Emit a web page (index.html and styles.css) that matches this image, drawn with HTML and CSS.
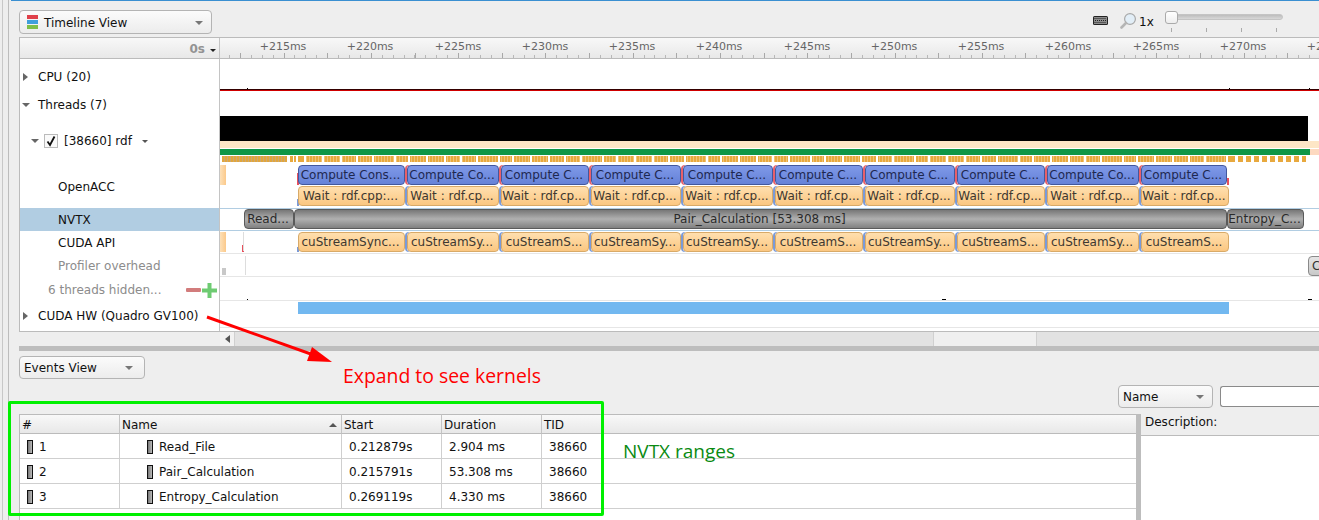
FILE: index.html
```html
<!DOCTYPE html>
<html lang="en">
<head>
    <meta charset="UTF-8">
    <meta name="viewport" content="width=device-width, initial-scale=1.0">
    <title>Timeline View</title>
    <link rel="stylesheet" href="styles.css">
</head>
<body>

<div class="page">
<div class="inner">
    <div class="topline"></div>

    <!-- Toolbar -->
    <div class="toolbar">
        <div class="select select-view">
            <svg class="view-icon" width="11" height="14" viewBox="0 0 11 14">
                <rect x="0" y="0" width="11" height="4" fill="#e0404a"/>
                <rect x="0" y="5" width="11" height="4" fill="#3f9fdc"/>
                <rect x="0" y="10" width="11" height="4" fill="#7fbf4a"/>
            </svg>
            <span>Timeline View</span>
            <i class="caret"></i>
        </div>
        <div class="tools">
            <svg class="kbd-icon" width="15" height="9" viewBox="0 0 15 9">
                <rect width="15" height="9" rx="1.5" fill="#222"/>
                <rect x="1" y="1" width="13" height="7" fill="#8c8c8c"/>
                <path d="M1.5 2.5h12M2 4.5h11M1.5 6.5h12" stroke="#222" stroke-width="1" stroke-dasharray="1 1"/>
            </svg>
            <svg class="zoom-icon" width="16" height="16" viewBox="0 0 16 16">
                <circle cx="10" cy="6" r="5.4" fill="#e2eef7" stroke="#a8a8a8" stroke-width="1.2"/>
                <path d="M6 10L1.5 14.5" stroke="#b5b5b5" stroke-width="2.6" stroke-linecap="round"/>
            </svg>
            <span class="zoom-value">1x</span>
            <div class="slider">
                <div class="slider-groove"></div>
                <div class="slider-handle"></div>
                <div class="slider-ticks"><i></i><i></i><i></i><i></i></div>
            </div>
        </div>
    </div>

    <!-- Timeline -->
    <div class="timeline">
        <div class="row row-ruler">
            <div class="label label-ruler"><b>0s</b><i class="sort-mark"></i></div>
            <div class="track ruler">
                <span class="ruler-text" style="left:63px">+215ms</span>
                <span class="ruler-text" style="left:150px">+220ms</span>
                <span class="ruler-text" style="left:238px">+225ms</span>
                <span class="ruler-text" style="left:325px">+230ms</span>
                <span class="ruler-text" style="left:412px">+235ms</span>
                <span class="ruler-text" style="left:499px">+240ms</span>
                <span class="ruler-text" style="left:587px">+245ms</span>
                <span class="ruler-text" style="left:674px">+250ms</span>
                <span class="ruler-text" style="left:761px">+255ms</span>
                <span class="ruler-text" style="left:848px">+260ms</span>
                <span class="ruler-text" style="left:936px">+265ms</span>
                <span class="ruler-text" style="left:1023px">+270ms</span>
                <span class="ruler-text" style="left:1110px">+275ms</span>
            </div>
        </div>

        <div class="row row-cpu">
            <div class="label lvl-0"><span class="arrow"><i class="tri-right"></i></span>CPU (20)</div>
            <div class="track">
                <div class="cpu-line"></div>
                <i class="dot" style="left:27px;top:29px"></i>
                <i class="dot" style="left:1009px;top:29px"></i>
                <i class="dot" style="left:1089px;top:29px"></i>
            </div>
        </div>

        <div class="row row-threads">
            <div class="label lvl-0"><span class="arrow"><i class="tri-down"></i></span>Threads (7)</div>
            <div class="track"></div>
        </div>

        <div class="row row-rdf">
            <div class="label lvl-1">
                <span class="arrow-small"><i class="tri-down"></i></span>
                <span class="check">
                    <svg width="12" height="12" viewBox="0 0 12 12"><path d="M2.5 6.5L5 10L9.5 1.5" fill="none" stroke="#111" stroke-width="1.8"/></svg>
                </span>
                <span class="thread-name">[38660] rdf</span>
                <i class="tri-mini"></i>
            </div>
            <div class="track">
                <div class="bar-black"></div>
                <div class="bar-beige"></div>
                <div class="bar-peach"></div>
                <div class="bar-green"></div>
                <div class="strip strip-a"></div>
                <div class="strip strip-b"></div>
                <div class="strip strip-c"></div>
                <div class="strip strip-d"></div>
            </div>
        </div>

        <div class="row row-acc">
            <div class="label lvl-2">OpenACC</div>
            <div class="track">
                <div class="stub" style="left:0;top:0;height:20px"></div>
                <i class="mark mark-red" style="left:77px;top:8px;height:12px"></i>
                <i class="mark mark-blue" style="left:77px;top:34px;height:7px"></i>
                <i class="mark mark-red" style="left:1007px;top:13px;height:7px"></i>
                <div class="block compute" style="left:78px;width:107px;top:0">Compute Cons...</div>
                <div class="block compute gap" style="left:187px;width:92px;top:0">Compute Co...</div>
                <div class="block compute gap" style="left:281px;width:88px;top:0">Compute C...</div>
                <div class="block compute gap" style="left:371px;width:90px;top:0">Compute C...</div>
                <div class="block compute gap" style="left:463px;width:90px;top:0">Compute C...</div>
                <div class="block compute gap" style="left:555px;width:88px;top:0">Compute C...</div>
                <div class="block compute gap" style="left:645px;width:90px;top:0">Compute C...</div>
                <div class="block compute gap" style="left:737px;width:88px;top:0">Compute C...</div>
                <div class="block compute gap" style="left:827px;width:92px;top:0">Compute Co...</div>
                <div class="block compute gap" style="left:921px;width:86px;top:0">Compute C...</div>
                <div class="block wait" style="left:78px;width:107px;top:21px">Wait : rdf.cpp:...</div>
                <div class="block wait gap" style="left:187px;width:92px;top:21px">Wait : rdf.cp...</div>
                <div class="block wait gap" style="left:281px;width:88px;top:21px">Wait : rdf.cp...</div>
                <div class="block wait gap" style="left:371px;width:90px;top:21px">Wait : rdf.cp...</div>
                <div class="block wait gap" style="left:463px;width:90px;top:21px">Wait : rdf.cp...</div>
                <div class="block wait gap" style="left:555px;width:88px;top:21px">Wait : rdf.cp...</div>
                <div class="block wait gap" style="left:645px;width:90px;top:21px">Wait : rdf.cp...</div>
                <div class="block wait gap" style="left:737px;width:88px;top:21px">Wait : rdf.cp...</div>
                <div class="block wait gap" style="left:827px;width:92px;top:21px">Wait : rdf.cp...</div>
                <div class="block wait gap" style="left:921px;width:88px;top:21px">Wait : rdf.cp...</div>
            </div>
        </div>

        <div class="row row-nvtx selected">
            <div class="label lvl-2">NVTX</div>
            <div class="track">
                <div class="block range" style="left:24px;width:50px;top:0">Read...</div>
                <div class="block range" style="left:74px;width:933px;top:0">Pair_Calculation [53.308 ms]</div>
                <div class="block range" style="left:1007px;width:77px;top:0">Entropy_C...</div>
            </div>
        </div>

        <div class="row row-api">
            <div class="label lvl-2">CUDA API</div>
            <div class="track">
                <div class="stub" style="left:0;top:1px;height:20px"></div>
                <i class="mark mark-red" style="left:22px;top:14px;height:7px"></i>
                <i class="overhead-b" style="left:23px;top:1px"></i>
                <i class="mark mark-blue" style="left:77px;top:16px;height:5px"></i>
                <div class="block wait" style="left:78px;width:107px;top:1px">cuStreamSync...</div>
                <div class="block wait gap" style="left:187px;width:92px;top:1px">cuStreamSy...</div>
                <div class="block wait gap" style="left:281px;width:88px;top:1px">cuStreamS...</div>
                <div class="block wait gap" style="left:371px;width:90px;top:1px">cuStreamSy...</div>
                <div class="block wait gap" style="left:463px;width:90px;top:1px">cuStreamSy...</div>
                <div class="block wait gap" style="left:555px;width:88px;top:1px">cuStreamS...</div>
                <div class="block wait gap" style="left:645px;width:90px;top:1px">cuStreamSy...</div>
                <div class="block wait gap" style="left:737px;width:88px;top:1px">cuStreamS...</div>
                <div class="block wait gap" style="left:827px;width:92px;top:1px">cuStreamSy...</div>
                <div class="block wait gap" style="left:921px;width:88px;top:1px">cuStreamS...</div>
            </div>
        </div>

        <div class="row row-overhead">
            <div class="label lvl-2 muted">Profiler overhead</div>
            <div class="track">
                <i class="overhead-a"></i>
                <i class="overhead-b" style="left:25px;top:2px"></i>
                <div class="block overhead" style="left:1088px;width:24px;top:2px">C</div>
            </div>
        </div>

        <div class="row row-hidden">
            <div class="label lvl-3 muted">
                <span>6 threads hidden...</span>
                <span class="hidden-btns">
                    <svg width="15" height="4" viewBox="0 0 15 4"><rect width="15" height="4" rx="1" fill="#d27c7c"/></svg>
                    <svg width="15" height="15" viewBox="0 0 15 15"><path d="M5.5 0h4v5.5H15v4H9.5V15h-4V9.5H0v-4h5.5z" fill="#6ecb72"/></svg>
                </span>
            </div>
            <div class="track">
                <i class="dot" style="left:27px;top:22px"></i>
                <i class="dot dot-wide" style="left:722px;top:22px"></i>
                <i class="dot dot-wide" style="left:1088px;top:22px"></i>
            </div>
        </div>

        <div class="row row-hw">
            <div class="label lvl-0"><span class="arrow"><i class="tri-right"></i></span>CUDA HW (Quadro GV100)</div>
            <div class="track">
                <div class="hw-bar"></div>
            </div>
        </div>
    </div>

    <!-- Horizontal scrollbar -->
    <div class="scrollbar">
        <div class="scroll-btn"><i class="tri-left"></i></div>
        <div class="scroll-track"><div class="scroll-thumb"></div></div>
    </div>

    <div class="splitter"></div>

    <!-- Events -->
    <div class="events-head">
        <div class="select select-events"><span>Events View</span><i class="caret"></i></div>
        <div class="filter">
            <div class="select select-name"><span>Name</span><i class="caret"></i></div>
            <div class="filter-input"></div>
        </div>
    </div>

    <div class="events-body">
        <table class="events">
            <thead>
                <tr>
                    <th class="col-num">#</th>
                    <th class="col-name">Name<i class="sort-up"></i></th>
                    <th class="col-num">Start</th>
                    <th class="col-num">Duration</th>
                    <th>TID</th>
                </tr>
            </thead>
            <tbody>
                <tr>
                    <td class="cell-id"><i class="swatch"></i>1</td>
                    <td class="cell-name"><i class="swatch"></i>Read_File</td>
                    <td>0.212879s</td>
                    <td>2.904 ms</td>
                    <td>38660</td>
                </tr>
                <tr>
                    <td class="cell-id"><i class="swatch"></i>2</td>
                    <td class="cell-name"><i class="swatch"></i>Pair_Calculation</td>
                    <td>0.215791s</td>
                    <td>53.308 ms</td>
                    <td>38660</td>
                </tr>
                <tr>
                    <td class="cell-id"><i class="swatch"></i>3</td>
                    <td class="cell-name"><i class="swatch"></i>Entropy_Calculation</td>
                    <td>0.269119s</td>
                    <td>4.330 ms</td>
                    <td>38660</td>
                </tr>
            </tbody>
        </table>
        <div class="v-split"></div>
        <div class="description">
            <div class="description-head">Description:</div>
            <div class="description-text"></div>
        </div>
    </div>
</div>
</div>

<!-- Annotations drawn on top of the screenshot -->
<svg class="note-arrow" width="1319" height="520" viewBox="0 0 1319 520">
    <path d="M207 317L322 358" stroke="#f00" stroke-width="3"/>
    <path d="M312 347L332 362L307 361z" fill="#f00"/>
</svg>
<div class="note note-expand">Expand to see kernels</div>
<div class="note note-ranges">NVTX ranges</div>
<div class="note-box"></div>

</body>
</html>
```

FILE: styles.css
```css
* {
    box-sizing: border-box;
}
body {
    margin: 0;
    width: 1319px;
    height: 520px;
    overflow: hidden;
    position: relative;
    background-color: #eeeeee;
    color: #111;
    font-family: "DejaVu Sans", sans-serif;
    font-size: 12px;
}
i {
    display: block;
    font-style: normal;
}

/* Frame lines left of the window */
.page {
    margin-left: 2px;
    height: 520px;
    border-left: 1px solid #c8c8c8;
}
.inner {
    margin-left: 5px;
    height: 520px;
    padding-left: 10px;
    border-left: 1px solid #bdbdbd;
}
.topline {
    height: 1px;
    margin-left: -8px;
    background-color: #3a8fd1;
}

/* Toolbar */
.toolbar {
    display: flex;
    height: 36px;
    padding-top: 9px;
}
.select {
    display: flex;
    align-items: center;
    height: 24px;
    border: 1px solid #b4b4b4;
    border-radius: 4px;
    background: linear-gradient(#fbfbfb, #ececec);
    white-space: nowrap;
}
.caret {
    margin-left: auto;
    width: 0;
    height: 0;
    border-left: 4px solid transparent;
    border-right: 4px solid transparent;
    border-top: 4px solid #777;
}
.select-view {
    width: 193px;
    padding: 2px 8px 0 7px;
}
.view-icon {
    margin-right: 6px;
    margin-top: -2px;
}
.tools {
    display: flex;
    align-items: flex-start;
    margin-left: auto;
    padding-right: 36px;
}
.kbd-icon {
    margin-top: 6px;
    margin-right: 12px;
}
.zoom-icon {
    margin-top: 3px;
    margin-right: 3px;
}
.zoom-value {
    margin-top: 5px;
    width: 26px;
}
.slider {
    position: relative;
    width: 118px;
    height: 24px;
}
.slider-groove {
    position: absolute;
    left: 0;
    right: 0;
    top: 4px;
    height: 6px;
    border-radius: 3px;
    background: linear-gradient(#bdbdbd, #d8d8d8);
    border: 1px solid #c4c4c4;
}
.slider-handle {
    position: absolute;
    left: 0;
    top: 1px;
    width: 13px;
    height: 13px;
    border-radius: 3px;
    border: 1px solid #aaa;
    background: linear-gradient(#ffffff, #eeeeee);
}
.slider-ticks {
    position: absolute;
    left: 6px;
    top: 18px;
    width: 106px;
    display: flex;
    justify-content: space-between;
}
.slider-ticks i {
    width: 1px;
    height: 4px;
    background-color: #aaa;
}

/* Timeline */
.timeline {
    height: 295px;
    border-left: 1px solid #bbb;
    border-top: 1px solid #bbb;
    border-bottom: 1px solid #bbb;
    background-color: white;
}
.row {
    display: flex;
}
.label {
    display: flex;
    align-items: center;
    flex: none;
    width: 200px;
    border-right: 1px solid #c4c4c4;
    white-space: nowrap;
}
.track {
    flex: 1;
    position: relative;
    overflow: hidden;
    background-color: white;
}
.lvl-0 {
    padding-left: 3px;
}
.lvl-1 {
    padding-left: 11px;
}
.lvl-2 {
    padding-left: 38px;
}
.lvl-3 {
    padding-left: 28px;
    padding-top: 2px;
}
.muted {
    color: #8c8c8c;
}
.arrow {
    width: 15px;
    flex: none;
}
.arrow-small {
    width: 13px;
    flex: none;
}
.tri-right {
    width: 0;
    height: 0;
    border-top: 4px solid transparent;
    border-bottom: 4px solid transparent;
    border-left: 5px solid #666;
}
.tri-down {
    width: 0;
    height: 0;
    border-left: 4px solid transparent;
    border-right: 4px solid transparent;
    border-top: 4px solid #666;
    margin-left: -1px;
}
.arrow-small .tri-down {
    margin-left: 0;
}
.tri-mini {
    width: 0;
    height: 0;
    margin-left: 10px;
    margin-top: 1px;
    border-left: 3px solid transparent;
    border-right: 3px solid transparent;
    border-top: 3px solid #555;
}
.tri-left {
    width: 0;
    height: 0;
    border-top: 4px solid transparent;
    border-bottom: 4px solid transparent;
    border-right: 5px solid #555;
}

/* Ruler */
.row-ruler {
    height: 21px;
    border-bottom: 1px solid #bbb;
    background: linear-gradient(#f8f8f8, #e8e8e8);
}
.label-ruler {
    justify-content: flex-end;
    padding-right: 3px;
    padding-top: 2px;
    color: #939393;
    font-size: 12px;
}
.sort-mark {
    width: 0;
    height: 0;
    margin-left: 5px;
    margin-top: 2px;
    border-left: 3px solid transparent;
    border-right: 3px solid transparent;
    border-top: 3px solid #222;
}
.ruler {
    background: transparent;
}
.ruler::before,
.ruler::after {
    content: "";
    position: absolute;
    bottom: 0;
    right: 0;
}
.ruler::before {
    left: 9.45px;
    height: 3px;
    background: repeating-linear-gradient(90deg, #b8b8b8 0 1px, transparent 1px 10.91px);
}
.ruler::after {
    left: 20.4px;
    height: 5px;
    background: repeating-linear-gradient(90deg, #a8a8a8 0 1px, transparent 1px 43.636px);
}
.ruler-text {
    position: absolute;
    top: 2px;
    transform: translateX(-50%);
    color: #666;
    font-size: 11px;
}

/* Rows */
.row-cpu {
    height: 32px;
}
.row-cpu .label {
    padding-top: 3px;
}
.row-threads {
    height: 25px;
}
.row-threads .label {
    padding-top: 3px;
}
.row-rdf {
    height: 49px;
}
.row-acc {
    height: 43px;
}
.row-nvtx,
.row-api,
.row-overhead {
    height: 23px;
}
.row-hidden {
    height: 24px;
}
.row-hw {
    height: 30px;
}
.row-nvtx .track {
    border-top: 1px solid #b1cde2;
    border-bottom: 1px solid #b1cde2;
}
.row-api .track,
.row-overhead .track,
.row-hidden .track {
    border-bottom: 1px solid #e6e6e6;
}
.row-hw .track {
    height: 27px;
    border-bottom: 1px solid #e6e6e6;
}
.selected .label {
    background-color: #b1cde2;
}
.cpu-line {
    position: absolute;
    left: 0;
    right: 0;
    top: 30px;
    height: 2px;
    background: linear-gradient(#300 0 1px, #d00000 1px);
}
.dot {
    position: absolute;
    width: 1px;
    height: 1px;
    background-color: black;
}
.dot-wide {
    width: 4px;
}
.check {
    display: flex;
    align-items: center;
    justify-content: center;
    flex: none;
    width: 14px;
    height: 14px;
    border: 1px solid #bbb;
    background-color: #fafafa;
}
.thread-name {
    margin-left: 6px;
}
.hidden-btns {
    display: flex;
    align-items: center;
    gap: 1px;
    margin-left: 25px;
}

/* Thread overview bars */
.bar-black {
    position: absolute;
    left: 0;
    top: 0;
    width: 1088px;
    height: 25px;
    background-color: black;
}
.bar-beige {
    position: absolute;
    left: 0;
    right: 0;
    top: 25px;
    height: 7px;
    background-color: #fde6c6;
}
.bar-peach {
    position: absolute;
    right: 0;
    width: 9px;
    top: 33px;
    height: 6px;
    background-color: #fdd9c0;
}
.bar-green {
    position: absolute;
    left: 0;
    top: 33px;
    width: 1090px;
    height: 6px;
    background-color: #0f9647;
}
.strip {
    position: absolute;
    top: 40px;
    height: 6px;
}
.strip-a {
    left: 2px;
    width: 65px;
    background: repeating-linear-gradient(90deg, #e2a63c 0 2px, #c9a876 2px 3px);
}
.strip-b {
    left: 70px;
    width: 15px;
    background: linear-gradient(90deg, #e8a93e 0 3px, transparent 3px 4px, #e8a93e 4px 6px, transparent 6px 8px, #e8a93e 8px 14px, transparent 14px);
}
.strip-c {
    left: 86px;
    width: 924px;
    background:
        repeating-linear-gradient(90deg, rgba(255, 255, 255, 0.3) 0 1px, transparent 1px 3px),
        repeating-linear-gradient(90deg,
            #e8a93e 0 16px, transparent 16px 18px,
            #e8a93e 18px 34px, transparent 34px 36px,
            #e8a93e 36px 50px, transparent 50px 52px,
            #e8a93e 52px 66px, transparent 66px 68px,
            #e8a93e 68px 88px, transparent 88px 90px,
            #e8a93e 90px 102px, transparent 102px 104px);
}
.strip-d {
    left: 1010px;
    width: 76px;
    background: repeating-linear-gradient(90deg, #e8a93e 0 5px, transparent 5px 8px);
}
.stub {
    position: absolute;
    width: 6px;
    background: linear-gradient(90deg, #fde0b8, #fbc98a);
}
.mark {
    position: absolute;
    width: 2px;
}
.mark-red {
    background-color: #e8505c;
}
.mark-blue {
    background-color: #7a9ad8;
}

/* Timeline blocks */
.block {
    position: absolute;
    height: 20px;
    padding-right: 2px;
    line-height: 18px;
    border: 1px solid;
    border-radius: 4px;
    text-align: center;
    white-space: nowrap;
    overflow: hidden;
}
.compute {
    border-color: #42589e;
    background: linear-gradient(#7f99e8, #6582d8);
    color: #1e2850;
}
.wait {
    border-color: #d8aa68;
    background: linear-gradient(#ffdfae, #fbc781);
    color: #3e3830;
}
.compute.gap {
    box-shadow: -2px 0 0 #e8606a;
}
.wait.gap {
    box-shadow: -2px 0 0 #7a9ad8;
}
.range {
    border-color: #5a5a5a;
    background: linear-gradient(#777, #b0b0b0 50%, #808080);
    color: #2a2a2a;
}
.overhead {
    border-color: #8a8a8a;
    background: linear-gradient(#e6e6e6, #c8c8c8);
    color: #333;
    text-align: left;
    padding-left: 3px;
}
.overhead-a {
    position: absolute;
    left: 2px;
    top: 14px;
    width: 4px;
    height: 7px;
    background-color: #c8c8c8;
}
.overhead-b {
    position: absolute;
    width: 1px;
    height: 19px;
    background-color: #dddddd;
}
.hw-bar {
    position: absolute;
    left: 78px;
    width: 931px;
    top: 1px;
    height: 12px;
    background-color: #72b8f0;
}

/* Scrollbar + splitter */
.scrollbar {
    display: flex;
    height: 14px;
    padding-left: 201px;
}
.scroll-btn {
    display: flex;
    align-items: center;
    justify-content: center;
    width: 14px;
    background-color: #f2f2f2;
}
.scroll-track {
    flex: 1;
    padding-left: 698px;
    background-color: #e2e2e2;
    border-left: 1px solid #d0d0d0;
}
.scroll-thumb {
    width: 104px;
    height: 14px;
    background-color: #efefef;
    border-left: 1px solid #d0d0d0;
    border-right: 1px solid #d0d0d0;
}
.splitter {
    height: 5px;
    background-color: #bdbdbd;
}

/* Events panel */
.events-head {
    display: flex;
    flex-direction: column;
    height: 63px;
    padding-top: 5px;
}
.select-events {
    width: 126px;
    height: 23px;
    padding: 0 11px 0 4px;
}
.filter {
    display: flex;
    align-items: center;
    gap: 7px;
    margin-top: 6px;
    margin-left: auto;
    margin-right: -1px;
}
.select-name {
    width: 95px;
    height: 23px;
    padding: 0 8px 0 4px;
}
.filter-input {
    width: 100px;
    height: 21px;
    border: 1px solid #8a8a8a;
    border-right: none;
    border-radius: 3px 0 0 3px;
    background-color: white;
}
.events-body {
    display: flex;
    height: 106px;
    border-left: 1px solid #bbb;
    background-color: white;
}
.events {
    width: 1116px;
    flex: none;
    align-self: flex-start;
    table-layout: fixed;
    border-collapse: separate;
    border-spacing: 0;
}
.events th {
    height: 20px;
    padding: 2px 0 0 2px;
    border-top: 1px solid #bbb;
    border-bottom: 1px solid #bbb;
    border-right: 1px solid #c4c4c4;
    background: linear-gradient(#f8f8f8, #e8e8e8);
    font-weight: normal;
    text-align: left;
}
.events th:last-child {
    border-right: none;
}
.col-num {
    width: 100px;
}
.col-name {
    width: 222px;
    position: relative;
}
.sort-up {
    position: absolute;
    right: 4px;
    top: 8px;
    width: 0;
    height: 0;
    border-left: 4px solid transparent;
    border-right: 4px solid transparent;
    border-bottom: 4px solid #555;
}
.events td {
    height: 25px;
    padding: 2px 0 0 7px;
    border-bottom: 1px solid #cfcfcf;
    border-right: 1px solid #cfcfcf;
    white-space: nowrap;
}
.events td:last-child {
    border-right: none;
}
.swatch {
    display: inline-block;
    width: 6px;
    height: 14px;
    margin-right: 6px;
    vertical-align: -3px;
    border: 1px solid #111;
    background: linear-gradient(90deg, #777, #bbb);
}
.cell-name {
    padding-left: 27px !important;
}
.v-split {
    width: 5px;
    flex: none;
    background-color: #bdbdbd;
}
.description {
    flex: 1;
    display: flex;
    flex-direction: column;
}
.description-head {
    height: 22px;
    padding: 1px 0 0 4px;
    line-height: 14px;
    border-bottom: 1px solid #bbb;
    background-color: #eeeeee;
}
.description-text {
    flex: 1;
    background-color: white;
}

/* Annotations */
.note-arrow {
    position: absolute;
    left: 0;
    top: 0;
    pointer-events: none;
}
.note {
    position: absolute;
    font-family: "Open Sans", sans-serif;
    white-space: nowrap;
}
.note-expand {
    left: 343px;
    top: 362px;
    color: #f00;
    font-size: 19.4px;
}
.note-ranges {
    left: 623px;
    top: 438px;
    color: #0a8a12;
    font-size: 19px;
}
.note-box {
    position: absolute;
    left: 8px;
    top: 401px;
    width: 596px;
    height: 115px;
    border: 3px solid #00f000;
    border-radius: 2px;
}
```
